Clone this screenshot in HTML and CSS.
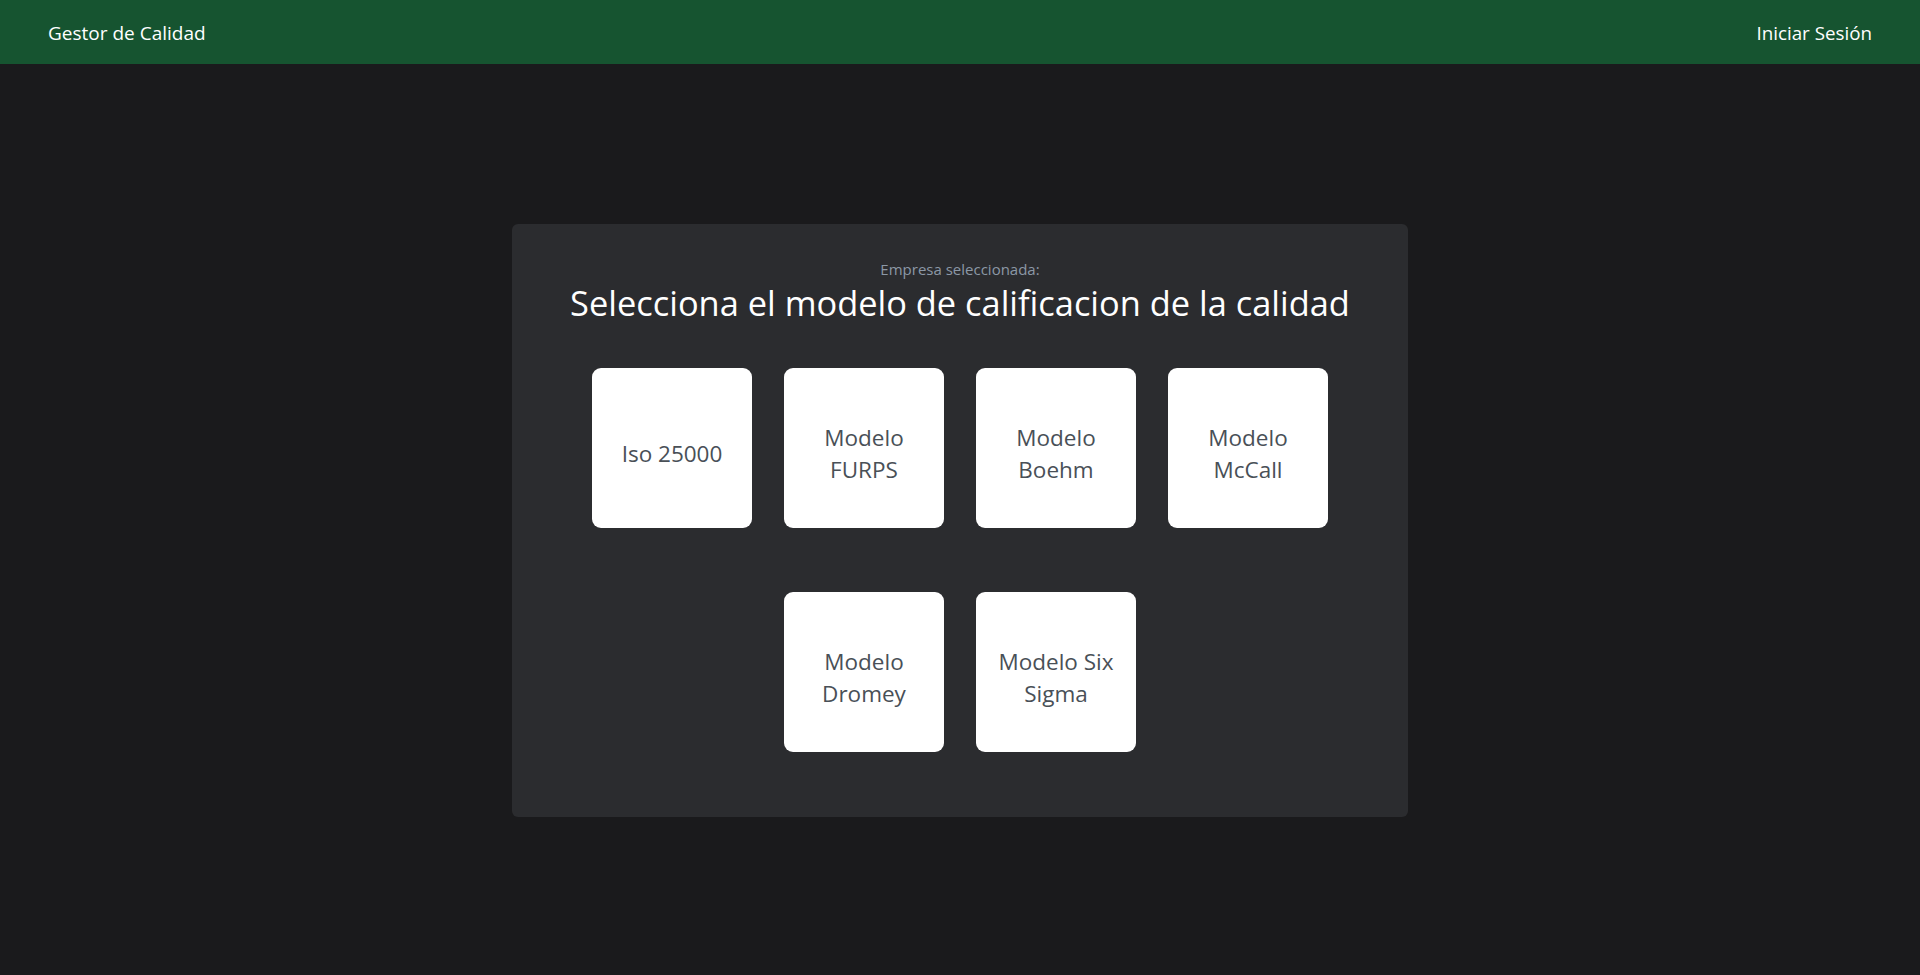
FILE: index.html
```html
<!DOCTYPE html>
<html lang="es">
<head>
<meta charset="utf-8">
<title>Gestor de Calidad</title>
<link rel="stylesheet" href="styles.css">
</head>
<body>
<nav class="navbar">
  <a class="brand" href="#">Gestor de Calidad</a>
  <a class="nav-link" href="#">Iniciar Sesión</a>
</nav>
<main class="main">
  <section class="card">
    <p class="subtitle">Empresa seleccionada:</p>
    <h1 class="title">Selecciona el modelo de calificacion de la calidad</h1>
    <div class="tiles">
      <a class="tile" href="#">Iso 25000</a>
      <a class="tile" href="#">Modelo FURPS</a>
      <a class="tile" href="#">Modelo Boehm</a>
      <a class="tile" href="#">Modelo McCall</a>
      <a class="tile" href="#">Modelo Dromey</a>
      <a class="tile" href="#">Modelo Six Sigma</a>
    </div>
  </section>
</main>
</body>
</html>
```

FILE: styles.css
```css
* { box-sizing: border-box; }
html, body {
  margin: 0;
  padding: 0;
  height: 100%;
}
body {
  background: #1a1a1c;
  font-family: "Open Sans", "Noto Sans", "Liberation Sans", sans-serif;
  color: #ffffff;
}
.navbar {
  height: 64px;
  background: #165430;
  display: flex;
  align-items: center;
  justify-content: space-between;
  padding: 2px 48px 0;
}
.brand, .nav-link {
  color: #ffffff;
  text-decoration: none;
  font-size: 19px;
  line-height: 1;
}
.nav-link {
  font-size: 18.8px;
}
.main {
  display: flex;
  justify-content: center;
  padding-top: 160px;
}
.card {
  width: 896px;
  background: #2b2c2f;
  border-radius: 6px;
  padding: 35px 48px 65px;
  text-align: center;
}
.subtitle {
  margin: 0;
  font-size: 15px;
  line-height: 20px;
  color: #8c98a6;
}
.title {
  margin: 2px 0 0;
  font-size: 34.4px;
  line-height: 44px;
  font-weight: 400;
  color: #ffffff;
}
.tiles {
  width: 736px;
  margin: 43px auto 0;
  display: flex;
  flex-wrap: wrap;
  justify-content: center;
  column-gap: 32px;
  row-gap: 64px;
}
.tile {
  width: 160px;
  height: 160px;
  background: #ffffff;
  border-radius: 9px;
  display: flex;
  align-items: center;
  justify-content: center;
  padding: 11px 14px 0;
  text-align: center;
  color: #495057;
  text-decoration: none;
  font-size: 22.5px;
  line-height: 32px;
}
```
